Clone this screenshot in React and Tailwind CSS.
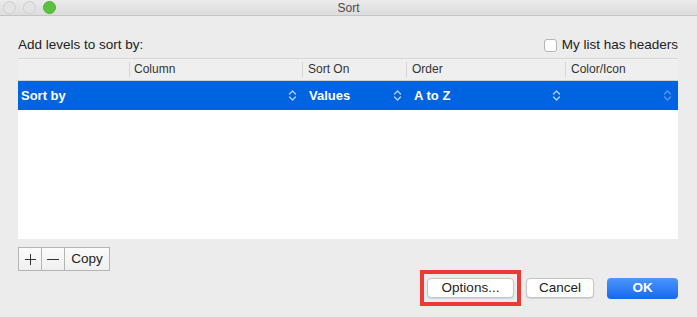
import React from "react";

const Chevron = ({ className = "" }) => (
  <svg width="9" height="13" viewBox="0 0 9 13" className={className}>
    <path d="M1.5 5 L4.5 2 L7.5 5 M1.5 8 L4.5 11 L7.5 8" fill="none" stroke="currentColor" strokeWidth="1.3" strokeLinecap="round" strokeLinejoin="round" />
  </svg>
);

export default function App() {
  return (
    <div
      className="w-[697px] h-[317px] bg-[#ececec] flex flex-col overflow-hidden text-[#222]"
      style={{ fontFamily: '"Liberation Sans", Arial, sans-serif' }}
    >
      {/* title bar */}
      <div className="relative h-[16px] bg-gradient-to-b from-[#ebebeb] to-[#dcdcdc] border-b border-[#c4c4c4] flex items-center">
        <div className="flex items-center gap-[7px] pl-[3px]">
          <span className="shrink-0 w-[13px] h-[13px] rounded-full border border-[#cfcfcf] bg-[#e3e3e3]" />
          <span className="shrink-0 w-[13px] h-[13px] rounded-full border border-[#cfcfcf] bg-[#e3e3e3]" />
          <span className="shrink-0 w-[13px] h-[13px] rounded-full bg-[#5bc13f] border border-[#4fae35]" />
        </div>
        <div className="absolute inset-0 flex items-center justify-center text-[12px] text-[#4a4a4a]">Sort</div>
      </div>

      <div className="px-[18px] pr-[19px] flex flex-col">
        {/* top row */}
        <div className="flex items-center justify-between mt-[20px] h-[18px]">
          <span className="text-[13.5px]">Add levels to sort by:</span>
          <label className="flex items-center gap-[5px] text-[13.5px]">
            <span className="w-[13px] h-[13px] rounded-[3px] border border-[#b5b5b5] bg-white" />
            My list has headers
          </label>
        </div>

        {/* table */}
        <div className="mt-[4px] bg-white h-[181px] flex flex-col">
          <div className="h-[23px] bg-[#efefef] border-t border-[#d8d8d8] border-b border-b-[#d0d0d0] flex items-center text-[12px] text-[#333]">
            <div className="w-[112px] h-[15px] border-r border-[#d6d6d6]" />
            <div className="w-[173px] h-[15px] border-r border-[#d6d6d6] pl-[4px] leading-[15px]">Column</div>
            <div className="w-[104px] h-[15px] border-r border-[#d6d6d6] pl-[5px] leading-[15px]">Sort On</div>
            <div className="w-[159px] h-[15px] border-r border-[#d6d6d6] pl-[5px] leading-[15px]">Order</div>
            <div className="flex-1 h-[15px] pl-[5px] leading-[15px]">Color/Icon</div>
          </div>
          <div className="h-[29px] bg-[#0064e1] flex items-center text-white text-[13px] font-bold">
            <div className="w-[285px] flex items-center justify-between pl-[3px] pr-[6px]">
              <span>Sort by</span>
              <Chevron className="text-[#b9d3f5]" />
            </div>
            <div className="w-[104px] flex items-center justify-between pl-[6px] pr-[5px]">
              <span>Values</span>
              <Chevron className="text-[#b9d3f5]" />
            </div>
            <div className="w-[159px] flex items-center justify-between pl-[7px] pr-[5px]">
              <span>A to Z</span>
              <Chevron className="text-[#b9d3f5]" />
            </div>
            <div className="flex-1 flex items-center justify-end pr-[6px]">
              <Chevron className="text-[#5a98ea]" />
            </div>
          </div>
        </div>

        {/* +/- copy */}
        <div className="mt-[8px] flex h-[24px] w-[92px] border border-[#b4b4b4] bg-gradient-to-b from-[#fbfbfb] to-[#f0f0f0] text-[13.5px]">
          <div className="w-[23px] border-r border-[#b4b4b4] flex items-center justify-center">
            <svg width="13" height="13" viewBox="0 0 13 13">
              <path d="M6.5 1 V12 M1 6.5 H12" stroke="#333" strokeWidth="1" />
            </svg>
          </div>
          <div className="w-[23px] border-r border-[#b4b4b4] flex items-center justify-center">
            <span className="block w-[12px] h-[1px] bg-[#333]" />
          </div>
          <div className="flex-1 flex items-center justify-center">Copy</div>
        </div>

        {/* bottom buttons */}
        <div className="flex items-center justify-end h-[36px] -mt-[1px]">
          <div className="h-[36px] w-[101px] border-[4px] border-[#ed3833] flex items-center justify-center mr-[5px]">
            <button className="w-[87px] h-[20px] bg-white rounded-[4px] border border-[#c3c3c3] shadow-[0_1px_1px_rgba(0,0,0,0.1)] text-[13.5px] leading-none">
              Options...
            </button>
          </div>
          <button className="w-[68px] h-[20px] bg-white rounded-[4px] border border-[#c3c3c3] shadow-[0_1px_1px_rgba(0,0,0,0.1)] text-[13.5px] leading-none mr-[13px]">
            Cancel
          </button>
          <button className="w-[71px] h-[21px] rounded-[4px] bg-gradient-to-b from-[#4c95fb] to-[#1467f0] text-white text-[13.5px] font-bold leading-none">
            OK
          </button>
        </div>
      </div>
    </div>
  );
}
